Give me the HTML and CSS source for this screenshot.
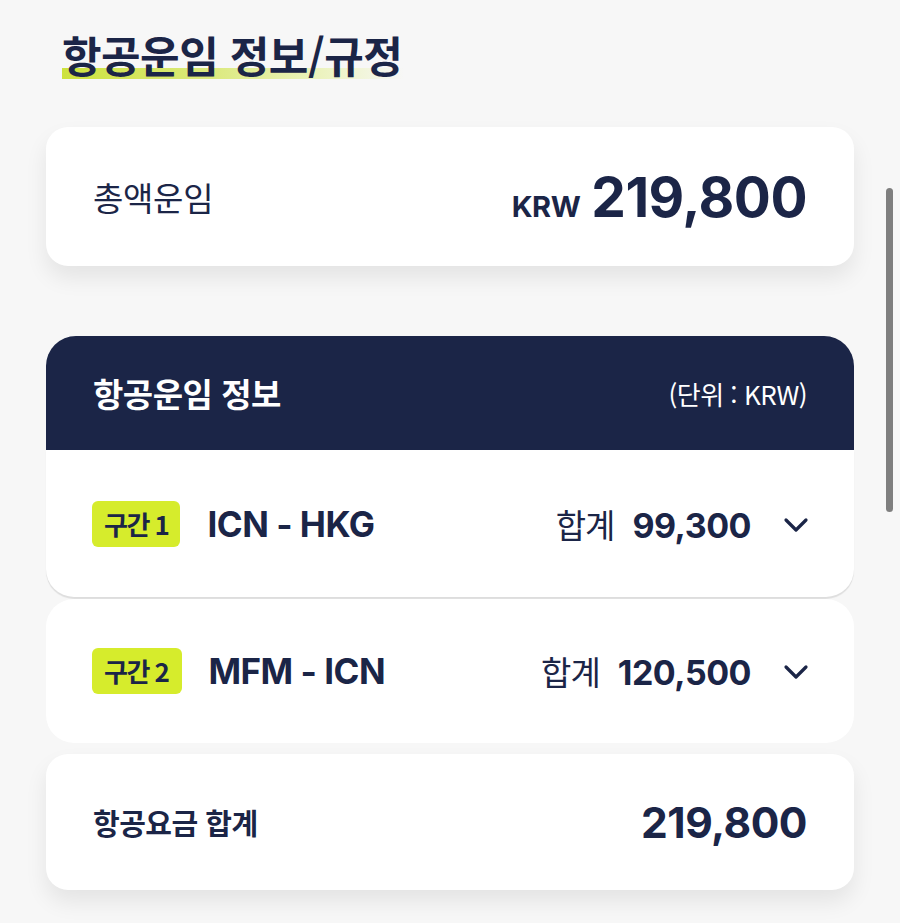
FILE: index.html
```
<!DOCTYPE html>
<html lang="ko">
<head>
<meta charset="utf-8">
<link rel="stylesheet" href="styles.css">
</head>
<body>
<div class="page">
  <h1 class="title"><span class="title-text">항공운임 정보/규정</span></h1>

  <div class="card total">
    <span class="total-label">총액운임</span>
    <span class="total-amount"><span class="cur">KRW</span><span class="num">219,800</span></span>
  </div>

  <div class="fare">
    <div class="fare-head">
      <span class="fare-title">항공운임 정보</span>
      <span class="fare-unit">(단위 : KRW)</span>
    </div>
    <div class="seg seg-first">
      <span class="badge">구간 1</span>
      <span class="route">ICN - HKG</span>
      <span class="sum"><span class="sum-label">합계</span><span class="sum-num">99,300</span></span>
      <svg class="chev" width="26" height="16" viewBox="0 0 26 16"><path d="M3 3 L13 13 L23 3" fill="none" stroke="#1b2547" stroke-width="3.2" stroke-linecap="round" stroke-linejoin="round"/></svg>
    </div>
  </div>

  <div class="seg seg-second">
    <span class="badge badge-wide">구간 2</span>
    <span class="route">MFM - ICN</span>
    <span class="sum"><span class="sum-label">합계</span><span class="sum-num">120,500</span></span>
    <svg class="chev" width="26" height="16" viewBox="0 0 26 16"><path d="M3 3 L13 13 L23 3" fill="none" stroke="#1b2547" stroke-width="3.2" stroke-linecap="round" stroke-linejoin="round"/></svg>
  </div>

  <div class="card grand">
    <span class="grand-label">항공요금 합계</span>
    <span class="grand-num">219,800</span>
  </div>
</div>
<div class="scrollbar"></div>
</body>
</html>
```

FILE: styles.css
```
html, body {
  margin: 0;
  padding: 0;
  background: #f7f7f7;
  height: 923px;
  overflow: hidden;
}
body {
  font-family: Inter, "Noto Sans CJK KR", sans-serif;
  color: #1b2547;
}
.page {
  width: 808px;
  padding: 24px 0 0 46px;
}
.title {
  margin: 0 0 0 16px;
  font-size: 43px;
  font-weight: 700;
  line-height: 60px;
  letter-spacing: -0.5px;
  font-family: "Noto Sans CJK KR", sans-serif;
  height: 60px;
}
.title-text {
  display: inline-block;
  background: linear-gradient(to right, #cde23c 0%, #dcea80 45%, #eef4c8 80%, rgba(247,247,247,0) 100%) no-repeat 0 44px / 100% 11px;
  padding-right: 2px;
}
.card {
  background: #fff;
  border-radius: 22px;
  box-shadow: 0 12px 22px rgba(0,0,0,0.08);
  display: flex;
  align-items: center;
  justify-content: space-between;
  padding: 0 47px;
}
.total {
  margin-top: 43px;
  height: 139px;
}
.total-label {
  font-family: "Noto Sans CJK KR", sans-serif;
  font-size: 33px;
  font-weight: 400;
  letter-spacing: -0.3px;
}
.total-amount {
  display: flex;
  align-items: baseline;
  gap: 11px;
}
.cur {
  font-size: 29px;
  font-weight: 700;
  letter-spacing: -0.5px;
}
.num {
  font-size: 55px;
  font-weight: 700;
  letter-spacing: -0.5px;
}
.fare {
  margin-top: 70px;
}
.fare-head {
  background: #1b2547;
  border-radius: 30px 30px 0 0;
  height: 114px;
  display: flex;
  align-items: center;
  justify-content: space-between;
  padding: 0 47px;
  color: #fff;
}
.fare-title {
  font-family: "Noto Sans CJK KR", sans-serif;
  font-size: 33px;
  font-weight: 700;
  letter-spacing: -0.5px;
}
.fare-unit {
  font-size: 26px;
  font-family: "Noto Sans CJK KR", sans-serif;
  font-weight: 400;
  letter-spacing: -0.5px;
}
.seg {
  background: #fff;
  display: flex;
  align-items: center;
  padding: 0 45px 0 46px;
}
.seg-first {
  height: 147px;
  border-radius: 0 0 28px 28px;
  box-shadow: 0 2px 1px rgba(0,0,0,0.10);
}
.seg-second {
  margin-top: 2px;
  height: 144px;
  border-radius: 28px;
}
.badge {
  background: #d6ec2c;
  border-radius: 6px;
  font-family: "Noto Sans CJK KR", sans-serif;
  font-size: 26px;
  font-weight: 700;
  height: 46px;
  line-height: 46px;
  padding: 0 12px;
  letter-spacing: -1.5px;
}
.badge-wide {
  padding: 0 14px 0 12px;
}
.route {
  font-size: 35px;
  font-weight: 700;
  margin-left: 27px;
  letter-spacing: -0.5px;
}
.seg-second .route {
  margin-left: 26px;
}
.sum {
  margin-left: auto;
  display: flex;
  align-items: baseline;
  gap: 18px;
}
.sum-label {
  font-family: "Noto Sans CJK KR", sans-serif;
  font-size: 33px;
  font-weight: 400;
  letter-spacing: -1px;
}
.sum-num {
  font-size: 34px;
  font-weight: 700;
  letter-spacing: -0.5px;
}
.chev {
  margin-left: 32px;
  margin-top: 2px;
}
.grand {
  margin-top: 11px;
  height: 136px;
}
.grand-label {
  font-family: "Noto Sans CJK KR", sans-serif;
  font-size: 29px;
  font-weight: 700;
  letter-spacing: -0.5px;
}
.grand-num {
  font-size: 42.5px;
  font-weight: 700;
  letter-spacing: -0.5px;
}
.scrollbar {
  position: fixed;
  left: 886px;
  top: 188px;
  width: 7px;
  height: 324px;
  border-radius: 4px;
  background: #7f7f7f;
}
```
